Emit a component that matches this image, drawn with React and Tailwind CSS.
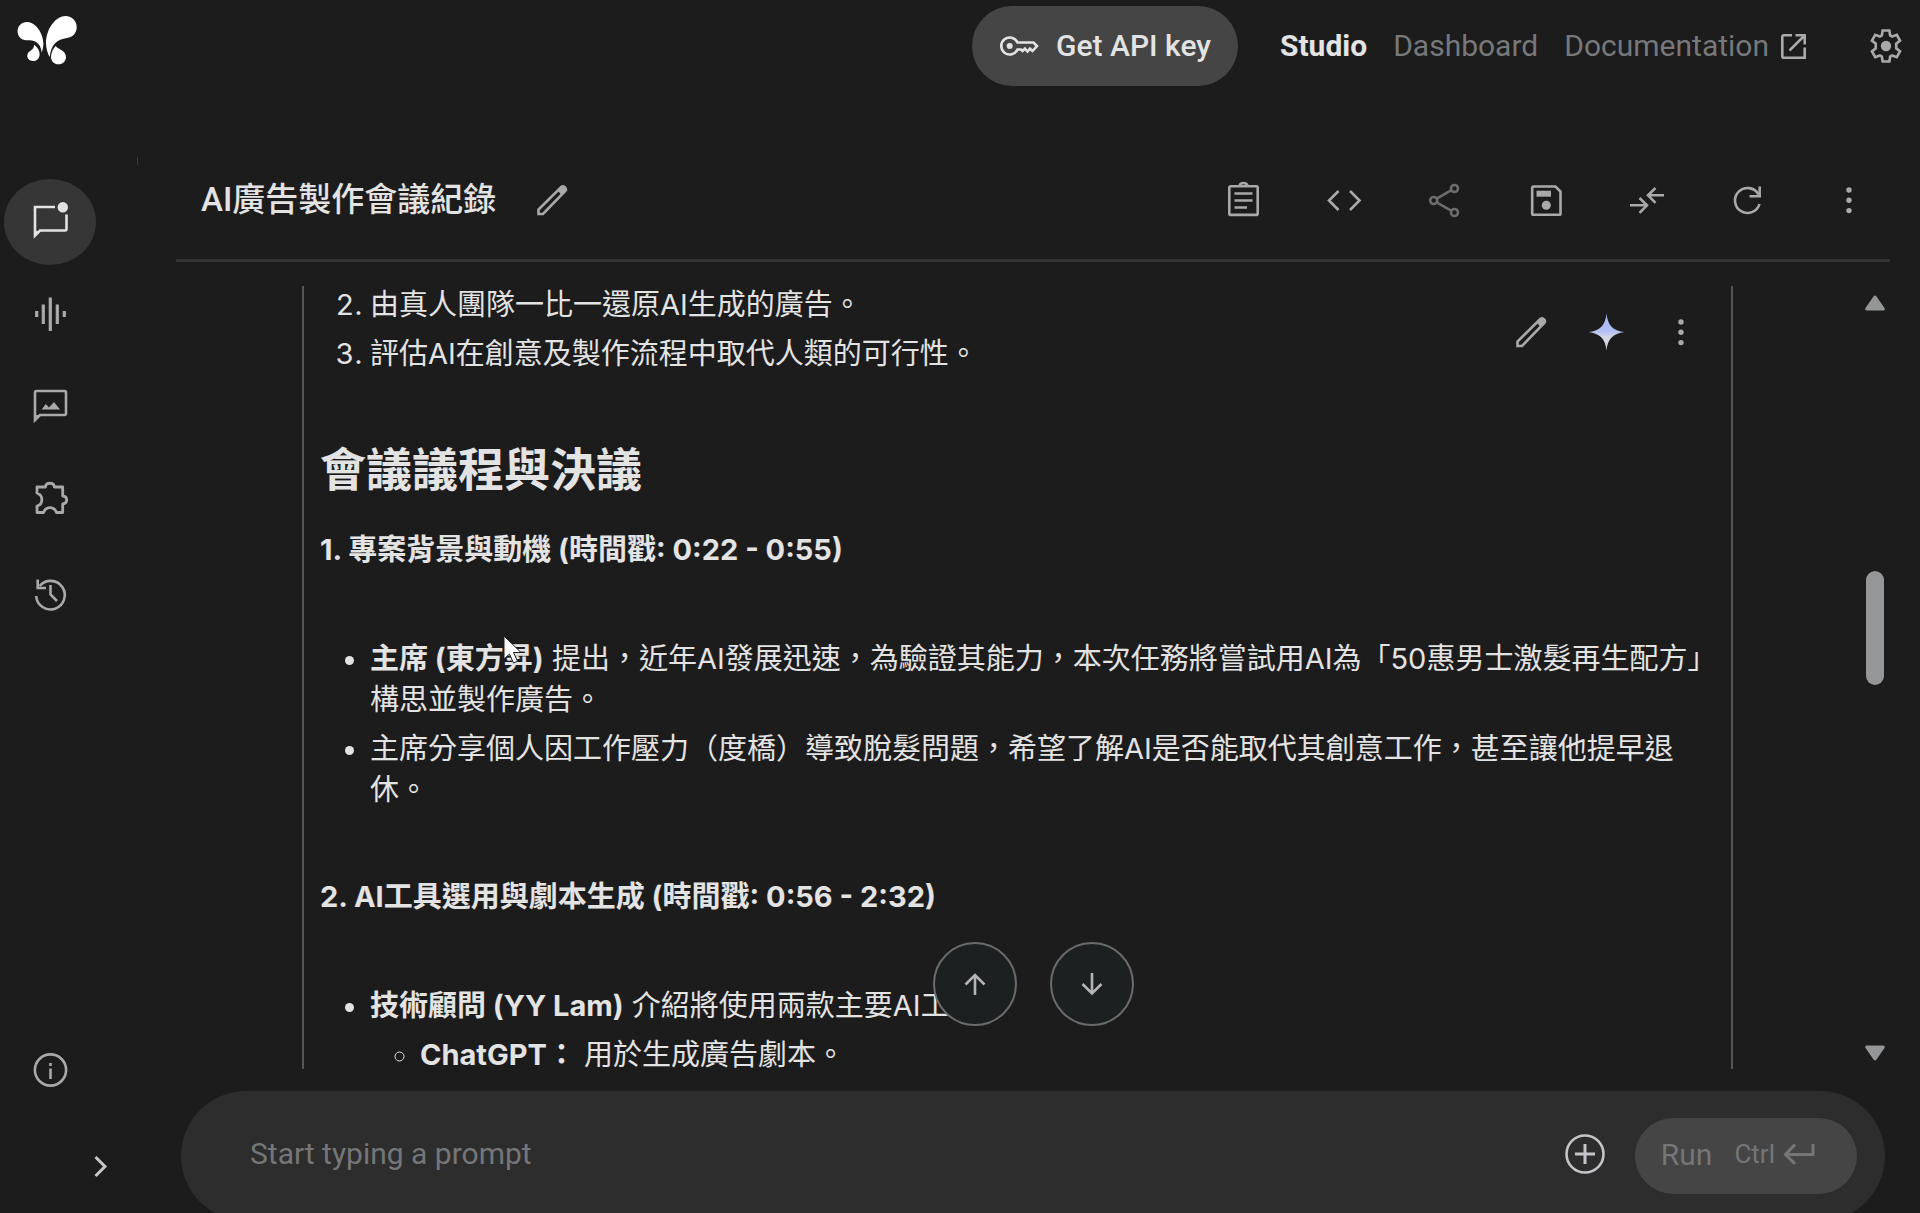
const HEADER_ACTIONS = [
  { label: 'Prompt details', icon: ClipboardIcon },
  { label: 'Get code', icon: CodeIcon },
  { label: 'Share', icon: ShareIcon, disabled: true },
  { label: 'Save', icon: SaveIcon },
  { label: 'Compare', icon: CompareIcon },
  { label: 'Reset', icon: RefreshIcon },
  { label: 'More', icon: DotsIcon },
];

function Icon({ children, className = 'size-10', viewBox = '0 0 40 40', strokeWidth = 2.6 }) {
  return (
    <svg
      viewBox={viewBox}
      className={`shrink-0 ${className}`}
      fill="none"
      stroke="currentColor"
      strokeWidth={strokeWidth}
      aria-hidden="true"
    >
      {children}
    </svg>
  );
}

function LogoIcon() {
  return (
    <svg viewBox="0 0 60 49" className="h-[49px] w-[60px]" fill="#fff" aria-hidden="true">
      <path d="M10 6C18 6 26 16 26.4 27.5C26.4 31 25.5 34 24.7 36.7C24 30 21 24.5 12 24.3H9.5C4 24.3 .6 20 .6 15.3C.6 10 4.5 6 10 6Z" />
      <path d="M48.7 0C55 0 59.7 5 59.7 11C59.7 17 56 21 50 22C40 23.5 34 28 32.7 41.3C30.5 37 29 32 29 27C29.3 12 39 0 48.7 0Z" />
      <path d="M17 28.7C20.5 31 23 35 22.6 39C22 43 19.5 45 16 45C12.8 45 10.3 43 10.3 39.8C10.3 34 17.5 35 17 28.7Z" />
      <path d="M38.7 30C40 33 49 34 49 41C49 45.5 45.5 48.3 41.5 48.3C37 48.3 34 45 34 41C34 37 36 32.5 38.7 30Z" />
    </svg>
  );
}

function KeyIcon() {
  return (
    <Icon>
      <path d="M18.5 16.5H34.5L38 20L33.5 25L31 22.7L28.5 25.5L26 22.7L23.5 25L22 23.5H18.5A8.5 8.5 0 1 1 18.5 16.5Z" />
      <circle cx="10.7" cy="20" r="3" fill="currentColor" stroke="none" />
    </Icon>
  );
}

function ExternalIcon() {
  return (
    <Icon className="size-8" viewBox="0 0 32 32">
      <path d="M15 5.3H6.8Q5.3 5.3 5.3 6.8V26.2Q5.3 27.7 6.8 27.7H27.7V17.5M12.5 20.5L27 6M18.5 5.3H27.7V14.5" />
    </Icon>
  );
}

function SettingsIcon() {
  return (
    <Icon viewBox="0 -960 960 960" strokeWidth={64}>
      <path d="M400-852H560L580-735L628-707L739-748L817-610L726-535V-425L817-350L739-212L628-253L580-225L560-108H400L380-225L332-253L221-212L143-350L234-425V-535L143-610L221-748L332-707L380-735Z" />
      <circle cx="480" cy="-480" r="125" fill="currentColor" stroke="none" />
    </Icon>
  );
}

function ChatIcon() {
  return (
    <Icon>
      <path d="M25 5H5V33.5L10 28.5H35Q36.5 28.5 36.5 27V12.5" />
      <path d="M5 29.5H9.5L5 34Z" fill="currentColor" strokeWidth="1" />
      <circle cx="32.8" cy="5.2" r="5.2" fill="currentColor" stroke="none" />
    </Icon>
  );
}

function StreamIcon() {
  return (
    <Icon strokeWidth={3.2} viewBox="0 1 40 40">
      <path d="M6.7 17v6M13.3 10.5v19.5M20.3 3.5v33.5M27.3 10.5v19.5M34.3 17v6" />
    </Icon>
  );
}

function MediaIcon() {
  return (
    <Icon viewBox="0 2 40 40">
      <path d="M5 34V6.5Q5 5 6.5 5H34.5Q36 5 36 6.5V27.5Q36 29 34.5 29H10Z" />
      <path d="M5 29.5H9.5L5 34Z" fill="currentColor" strokeWidth="1" />
      <path d="M11.7 23.5L15.8 18L19 21.5L24 16L30 23.5Z" fill="currentColor" stroke="none" />
    </Icon>
  );
}

function BuildIcon() {
  return (
    <Icon strokeWidth={2.8} viewBox="0 2 40 40">
      <path
        d="M7 8H15.5C15.8 3 24 3 24.3 8H32.7V17C38 17.5 38 24.5 32.7 25V33.5H26.5C24 27 16 27 13.5 33.5H7V27C13.5 25 13.5 16.5 7 14Z"
        strokeLinejoin="round"
      />
    </Icon>
  );
}

function HistoryIcon() {
  return (
    <Icon>
      <path d="M6.2 22A14.3 14.3 0 1 0 9.5 12" />
      <path d="M7.7 5.5V14H16M20.5 11V20.5L27 27" />
    </Icon>
  );
}

function InfoIcon() {
  return (
    <Icon>
      <circle cx="20.5" cy="20" r="15.6" />
      <path d="M20.5 18.5V29M20.5 13V16" />
    </Icon>
  );
}

function ChevronIcon() {
  return (
    <Icon strokeWidth={3}>
      <path d="M15.5 10L25 19.5L15.5 29" />
    </Icon>
  );
}

function PencilIcon() {
  return (
    <Icon>
      <path d="M6.5 34V29.5L29.5 6.8Q31 5.8 32.5 7L33.5 8Q34.5 9.5 33.3 11L11 34Z" />
      <path d="M25.5 10.5L30.5 6L34.5 10L29.5 15Z" fill="currentColor" stroke="none" />
    </Icon>
  );
}

function ClipboardIcon() {
  return (
    <Icon>
      <rect x="6.3" y="6.3" width="28.4" height="28.6" rx="1.5" />
      <path d="M16.5 6Q17 3 20.5 3T24.5 6" />
      <path d="M11.5 13.5H29.5M11.5 20.5H29.5M11.5 27.5H24" />
    </Icon>
  );
}

function CodeIcon() {
  return (
    <Icon>
      <path d="M14.5 11L5 20.5L14.5 30M26 11L35.5 20.5L26 30" />
    </Icon>
  );
}

function ShareIcon() {
  return (
    <Icon>
      <circle cx="8.7" cy="20.5" r="3.5" />
      <circle cx="29.5" cy="8.5" r="3.5" />
      <circle cx="29.5" cy="32.5" r="3.5" />
      <path d="M11.7 18.7L26.5 10.2M11.7 22.3L26.5 30.8" />
    </Icon>
  );
}

function SaveIcon() {
  return (
    <Icon>
      <path d="M7.5 6.5H29.5L34.5 11.5V33.5Q34.5 34.8 33.2 34.8H7.5Q6.2 34.8 6.2 33.5V7.8Q6.2 6.5 7.5 6.5Z" />
      <path d="M10.5 10.7H25V16.7H10.5Z" fill="currentColor" stroke="none" />
      <circle cx="20.3" cy="25.3" r="4.5" fill="currentColor" stroke="none" />
    </Icon>
  );
}

function CompareIcon() {
  return (
    <Icon>
      <path d="M3 25.3H19.5M12.5 18L20 25.3L12.5 32.8M37 15.3H21.5M28.5 8L21 15.3L28.5 22.8" />
    </Icon>
  );
}

function RefreshIcon() {
  return (
    <Icon>
      <path d="M31.5 24A12.5 12.5 0 1 1 30.5 14.5" />
      <path d="M31.7 6.5V16.3H21.5" />
    </Icon>
  );
}

function DotsIcon() {
  return (
    <Icon>
      <g fill="currentColor" stroke="none">
        <circle cx="20" cy="10" r="2.7" />
        <circle cx="20" cy="20.3" r="2.7" />
        <circle cx="20" cy="30.6" r="2.7" />
      </g>
    </Icon>
  );
}

function SparkIcon() {
  return (
    <svg viewBox="0 0 40 40" className="size-10 shrink-0" aria-hidden="true">
      <defs>
        <linearGradient id="spark" x1="0" y1="0" x2="0" y2="1">
          <stop offset="0.45" stopColor="#aebcf5" />
          <stop offset="0.65" stopColor="#d5d8e2" />
        </linearGradient>
      </defs>
      <path
        d="M20.5 1.5C21.5 13 27 19 38.5 20C27 21.5 21.5 27 20.5 38.5C19.5 27 14 21.5 2.5 20C14 19 19.5 13 20.5 1.5Z"
        fill="url(#spark)"
      />
    </svg>
  );
}

function Header() {
  return (
    <header className="flex h-[140px] shrink-0 items-start justify-between pt-[6px] pr-[14px] pl-[17px]">
      <a href="#home" aria-label="Home" className="mt-[10px]">
        <LogoIcon />
      </a>
      <nav className="flex h-20 items-center text-[30px] leading-10 text-[#77787a]">
        <button
          type="button"
          className="mr-[42px] flex h-20 items-center gap-[17px] rounded-full bg-[#454545] px-[27px] font-medium text-[#e3e3e3]"
        >
          <KeyIcon />
          Get API key
        </button>
        <a href="#studio" className="mr-[26px] font-bold text-[#e3e3e3]">Studio</a>
        <a href="#dashboard" className="mr-[26px]">Dashboard</a>
        <a href="#documentation" className="mr-[57px] flex items-center gap-2">
          Documentation
          <span className="text-[#a8a9ab]"><ExternalIcon /></span>
        </a>
        <button type="button" aria-label="Settings" className="text-[#a8a9ab]">
          <SettingsIcon />
        </button>
      </nav>
    </header>
  );
}

function SideButton({ label, icon: Glyph, active }) {
  return (
    <button
      type="button"
      aria-label={label}
      className={
        active
          ? 'flex h-[86px] w-[92px] items-center justify-center rounded-[50%] bg-[#363636] text-[#e3e3e3]'
          : 'flex h-[86px] w-[92px] items-center justify-center'
      }
    >
      <Glyph />
    </button>
  );
}

function Sidebar() {
  return (
    <aside className="flex w-[176px] shrink-0 flex-col pl-1 text-[#a8a9ab]">
      <div className="ml-[133px] h-[39px] w-px pt-[17px]">
        <div className="h-2 bg-[#3a3a3a]" />
      </div>
      <nav className="flex flex-col gap-[7px]">
        <SideButton label="Chat" icon={ChatIcon} active />
        <SideButton label="Stream" icon={StreamIcon} />
        <SideButton label="Generate media" icon={MediaIcon} />
        <SideButton label="Build" icon={BuildIcon} />
        <SideButton label="History" icon={HistoryIcon} />
      </nav>
      <div className="mt-auto mb-[26px]">
        <SideButton label="About" icon={InfoIcon} />
        <button type="button" aria-label="Expand" className="mt-[34px] ml-[76px] block text-[#c4c7c5]">
          <ChevronIcon />
        </button>
      </div>
    </aside>
  );
}

function TitleBar() {
  return (
    <div className="flex h-[122px] shrink-0 items-center justify-between border-b-[3px] border-[#333] pr-[21px] pl-[25px] text-[#a8a9ab]">
      <div className="flex items-center gap-9">
        <h1 className="text-[33px] leading-10 font-medium text-[#e3e3e3]">AI廣告製作會議紀錄</h1>
        <button type="button" aria-label="Edit title">
          <PencilIcon />
        </button>
      </div>
      <div className="flex items-center gap-[61px]">
        {HEADER_ACTIONS.map(({ label, icon: Glyph, disabled }) => (
          <button key={label} type="button" aria-label={label} className={disabled ? 'text-[#6b6c6e]' : ''}>
            <Glyph />
          </button>
        ))}
      </div>
    </div>
  );
}

function Transcript() {
  return (
    <article className="relative min-w-0 flex-1 border-x-2 border-[#555] pr-1 pl-4 font-['Inter','Noto_Sans_CJK_TC',sans-serif] text-[29px] leading-[41px]">
      <ol start={2} className="-mt-[2px] flex list-decimal flex-col gap-2 pl-[50px]">
        <li>由真人團隊一比一還原AI生成的廣告。</li>
        <li>評估AI在創意及製作流程中取代人類的可行性。</li>
      </ol>
      <h2 className="mt-[67px] text-[46px] leading-[56px] font-bold">會議議程與決議</h2>
      <h3 className="mt-8 font-bold">1. 專案背景與動機 (時間戳: 0:22 - 0:55)</h3>
      <ul className="mt-[68px] flex list-disc flex-col gap-2 pl-[50px]">
        <li>
          <strong>主席 (東方昇)</strong> 提出，近年AI發展迅速，為驗證其能力，本次任務將嘗試用AI為「50惠男士激髮再生配方」構思並製作廣告。
        </li>
        <li>
          主席分享個人因工作壓力（度橋）導致脫髮問題，希望了解AI是否能取代其創意工作，甚至讓他提早退休。
        </li>
      </ul>
      <h3 className="mt-[66px] font-bold">2. AI工具選用與劇本生成 (時間戳: 0:56 - 2:32)</h3>
      <ul className="mt-[68px] list-disc pl-[50px]">
        <li>
          <strong>技術顧問 (YY Lam)</strong> 介紹將使用兩款主要AI工具：
          <ul className="mt-2 list-[circle] pl-[50px]">
            <li>
              <strong>ChatGPT：</strong> 用於生成廣告劇本。
            </li>
          </ul>
        </li>
      </ul>
      <div className="absolute top-[26px] right-[30px] flex gap-[35px] text-[#a8a9ab]">
        <button type="button" aria-label="Edit">
          <PencilIcon />
        </button>
        <button type="button" aria-label="Rerun">
          <SparkIcon />
        </button>
        <button type="button" aria-label="More options">
          <DotsIcon />
        </button>
      </div>
      <svg viewBox="0 0 20 31" className="absolute top-[349px] left-[199px] h-[31px] w-5" aria-hidden="true">
        <path d="M1 1V24L6.5 19L10.5 28L14.5 26.3L10.5 17.5H18Z" fill="#fff" stroke="#1c1c1c" />
      </svg>
    </article>
  );
}

function ScrollTrack() {
  return (
    <div className="flex w-[157px] shrink-0 flex-col items-end pr-1 text-[#959697]">
      <svg viewBox="0 0 22 16" className="mt-[9px] h-4 w-[22px]" fill="currentColor" aria-hidden="true">
        <path d="M9.5 1.5Q11 -.5 12.5 1.5L20.5 13Q21.5 15.5 19 15.5H3Q.5 15.5 1.5 13Z" />
      </svg>
      <div className="mt-[260px] mr-[2px] h-[114px] w-[18px] rounded-full bg-[#959697]" />
      <svg viewBox="0 0 22 16" className="mt-auto mb-[8px] h-4 w-[22px]" fill="currentColor" aria-hidden="true">
        <path d="M9.5 14.5Q11 16.5 12.5 14.5L20.5 3Q21.5 .5 19 .5H3Q.5 .5 1.5 3Z" />
      </svg>
    </div>
  );
}

function JumpButtons() {
  const style = 'flex size-[84px] items-center justify-center rounded-full border-2 border-[#6a6b6c] bg-[#1d2020] text-[#b4b5b8]';
  return (
    <div className="absolute inset-x-0 bottom-[65px] flex justify-center gap-[33px]">
      <button type="button" aria-label="Previous turn" className={style}>
        <Icon>
          <path d="M20 31V11M10.5 20.5L20 11L29.5 20.5" />
        </Icon>
      </button>
      <button type="button" aria-label="Next turn" className={style}>
        <Icon>
          <path d="M20 9V29.5M10.5 20L20 29.5L29.5 20" />
        </Icon>
      </button>
    </div>
  );
}

function PromptBar() {
  return (
    <form className="mr-[5px] -mb-2 ml-[5px] flex h-[130px] shrink-0 items-center rounded-full bg-[#2d2d2d] pr-7 pb-1 pl-[69px]">
      <input
        type="text"
        aria-label="Prompt"
        placeholder="Start typing a prompt"
        className="min-w-0 flex-1 bg-transparent text-[30px] leading-10 outline-none placeholder:text-[#757678]"
      />
      <button type="button" aria-label="Add content" className="mr-[30px] text-[#c4c5c9]">
        <Icon>
          <circle cx="20" cy="20" r="18.5" />
          <path d="M20 10V30M10 20H30" strokeWidth="3" />
        </Icon>
      </button>
      <button
        type="button"
        className="mt-1 flex h-[76px] items-center rounded-full bg-[#454545] pr-[42px] pb-1 pl-[26px] text-[30px] text-[#757678]"
      >
        Run
        <span className="ml-[22px] text-[26px]">Ctrl</span>
        <Icon className="ml-2 h-6 w-8" viewBox="0 0 32 24" strokeWidth={3}>
          <path d="M30 2V12.5H3M12 2.5L2.5 12.5L12 22" />
        </Icon>
      </button>
    </form>
  );
}

export default function App() {
  return (
    <div
      lang="zh-Hant"
      className="flex h-screen flex-col overflow-hidden bg-[#1c1c1c] font-['Roboto','Noto_Sans_CJK_TC',sans-serif] text-[#e3e3e3]"
    >
      <Header />
      <div className="flex min-h-0 flex-1">
        <Sidebar />
        <main className="mr-[30px] flex min-w-0 flex-1 flex-col">
          <TitleBar />
          <section className="relative flex min-h-0 flex-1 overflow-hidden pt-6 pb-[22px] pl-[126px]">
            <Transcript />
            <ScrollTrack />
            <JumpButtons />
          </section>
          <PromptBar />
        </main>
      </div>
    </div>
  );
}
